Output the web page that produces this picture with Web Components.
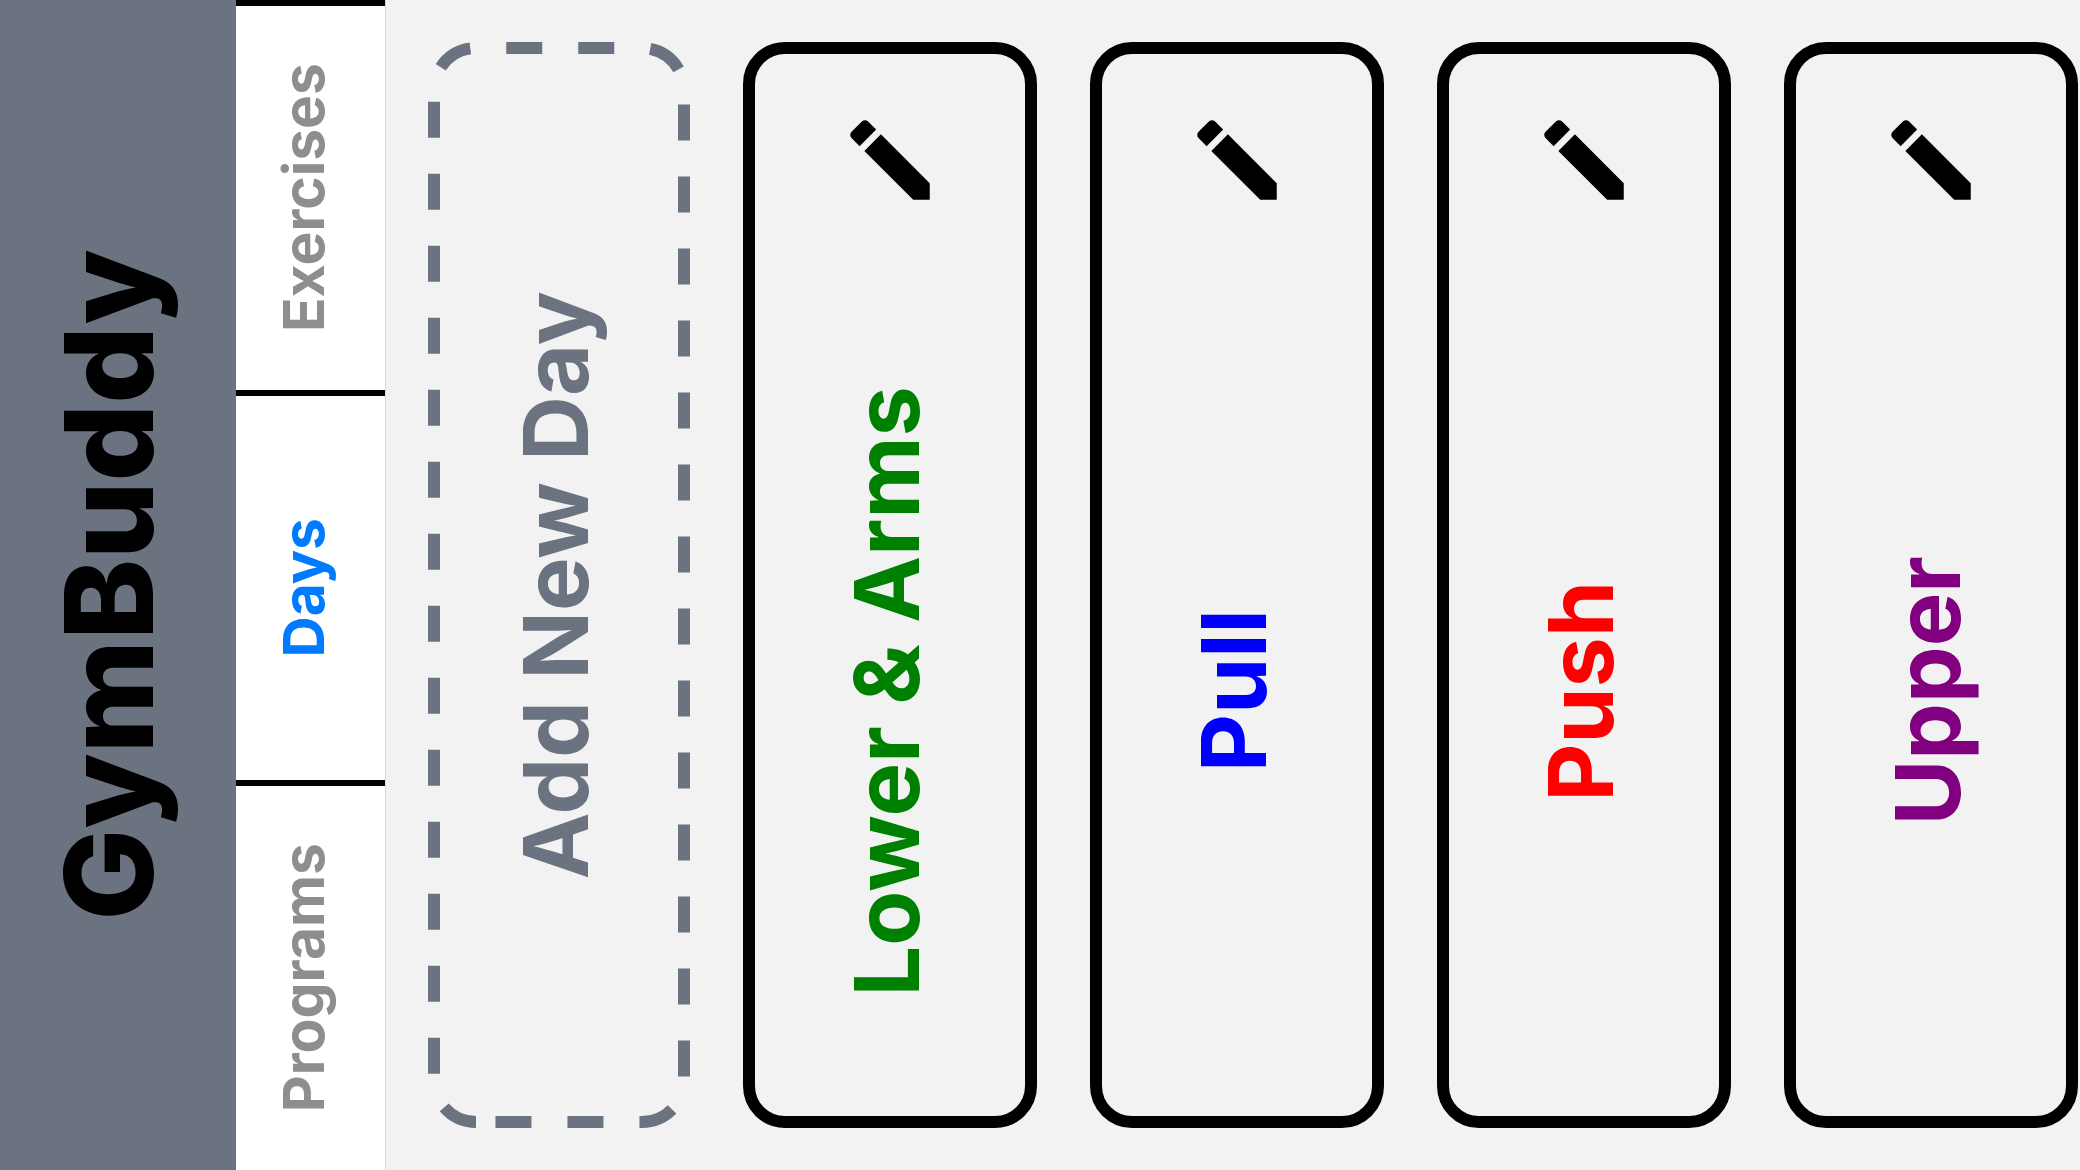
<!DOCTYPE html>
<html lang="en">
<head>
<meta charset="utf-8">
<title>GymBuddy</title>
<style>
  html, body { margin: 0; height: 100%; }
  body { font-family: Inter, "Liberation Sans", sans-serif; background: #f2f2f2; color: #000; }
</style>
</head>
<body>
<gym-app>
  <app-title slot="title">GymBuddy</app-title>
  <tab-bar slot="tabs">
    <tab-link href="#exercises">Exercises</tab-link>
    <tab-link href="#days" active>Days</tab-link>
    <tab-link href="#programs">Programs</tab-link>
  </tab-bar>
  <add-button>Add New Day</add-button>
  <day-card style="--day-color: green">Lower &amp; Arms</day-card>
  <day-card style="--day-color: blue">Pull</day-card>
  <day-card style="--day-color: red">Push</day-card>
  <day-card style="--day-color: purple">Upper</day-card>
</gym-app>
<script>
  // Text that reads from bottom to top.
  const upright = `
    .label { writing-mode: vertical-rl; transform: rotate(180deg); white-space: nowrap; }
  `;

  function define(name, html, setup) {
    const template = document.createElement('template');
    template.innerHTML = html;
    customElements.define(name, class extends HTMLElement {
      constructor() {
        super();
        this.attachShadow({ mode: 'open' }).append(template.content.cloneNode(true));
      }
      connectedCallback() { if (setup) setup(this, this.shadowRoot); }
    });
  }

  define('gym-app', `
    <style>
      :host { display: flex; height: 100vh; overflow: hidden; }
      main {
        flex: 1; min-width: 0; box-sizing: border-box;
        display: flex; gap: 53px; padding: 42px;
        overflow-x: auto; scrollbar-width: none;
      }
    </style>
    <slot name="title"></slot>
    <slot name="tabs"></slot>
    <main><slot></slot></main>
  `);

  define('app-title', `
    <style>
      ${upright}
      :host { display: block; flex: none; }
      header {
        height: 100%; width: 236px; box-sizing: border-box; padding-right: 18px;
        display: flex; align-items: center; justify-content: center;
        background: #6b7280;
      }
      h1 { margin: 0; font-size: 122px; line-height: 148px; font-weight: 800; }
    </style>
    <header><h1 class="label"><slot></slot></h1></header>
  `);

  define('tab-bar', `
    <style>
      :host { display: block; flex: none; }
      nav {
        height: 100%; width: 150px; box-sizing: border-box;
        display: flex; flex-direction: column;
        background: #fff; border-right: 1px solid #d8d8d8;
      }
    </style>
    <nav aria-label="Sections"><slot></slot></nav>
  `);

  define('tab-link', `
    <style>
      ${upright}
      :host { display: flex; flex: 1; --tint: #8e8e8f; }
      :host([active]) { --tint: #007aff; }
      a {
        flex: 1; box-sizing: border-box; padding-right: 14px;
        display: flex; align-items: center; justify-content: center;
        border-top: 6px solid #000; color: var(--tint); text-decoration: none;
        font-size: 57px; line-height: 70px; font-weight: 700;
      }
    </style>
    <a><span class="label"><slot></slot></span></a>
  `, (host, root) => {
    const link = root.querySelector('a');
    link.href = host.getAttribute('href');
    if (host.hasAttribute('active')) link.setAttribute('aria-current', 'page');
  });

  define('add-button', `
    <style>
      ${upright}
      :host { display: flex; flex: none; }
      button {
        position: relative; width: 262px; border: 0; padding: 0 6px 0 0; margin: 0;
        display: flex; align-items: center; justify-content: center;
        background: none; color: #6b7280; cursor: pointer;
        font: 700 90px/110px Inter, "Liberation Sans", sans-serif;
      }
      svg { position: absolute; inset: 0; width: 100%; height: 100%; }
      path { fill: none; stroke: #6b7280; stroke-width: 12; stroke-dasharray: 36; }
    </style>
    <button type="button">
      <svg aria-hidden="true"><path/></svg>
      <span class="label"><slot></slot></span>
    </button>
  `, (host, root) => {
    // Dashed outline that follows the button's size, starting at its bottom left corner.
    const button = root.querySelector('button');
    const path = root.querySelector('path');
    const draw = () => {
      const w = button.clientWidth, h = button.clientHeight;
      const a = 6, r = 42;
      path.setAttribute('d',
        `M${a + r} ${h - a}A${r} ${r} 0 0 1 ${a} ${h - a - r}V${a + r}` +
        `A${r} ${r} 0 0 1 ${a + r} ${a}H${w - a - r}` +
        `A${r} ${r} 0 0 1 ${w - a} ${a + r}V${h - a - r}` +
        `A${r} ${r} 0 0 1 ${w - a - r} ${h - a}Z`);
    };
    draw();
    new ResizeObserver(draw).observe(button);
  });

  define('day-card', `
    <style>
      ${upright}
      :host { display: flex; flex: none; }
      article {
        width: 294px; box-sizing: border-box; padding-top: 53px;
        display: flex; flex-direction: column; align-items: center; gap: 53px;
        border: 12px solid #000; border-radius: 42px;
      }
      button { border: 0; padding: 0; margin: 0; background: none; color: #000; cursor: pointer; }
      svg { display: block; width: 106px; height: 106px; }
      .name { flex: 1; display: flex; align-items: center; padding-right: 6px; }
      h2 { margin: 0; color: var(--day-color); font-size: 90px; line-height: 110px; font-weight: 700; }
    </style>
    <article>
      <button type="button" aria-label="Edit day">
        <svg viewBox="0 0 24 24" fill="currentColor" aria-hidden="true">
          <path transform="rotate(-90 12 12)" d="M3 17.25V21h3.75L17.81 9.94l-3.75-3.75L3 17.25zM20.71 7.04c.39-.39.39-1.02 0-1.41l-2.34-2.34c-.39-.39-1.02-.39-1.41 0l-1.83 1.83 3.75 3.75 1.83-1.83z"/>
        </svg>
      </button>
      <div class="name"><h2 class="label"><slot></slot></h2></div>
    </article>
  `);
</script>
</body>
</html>
